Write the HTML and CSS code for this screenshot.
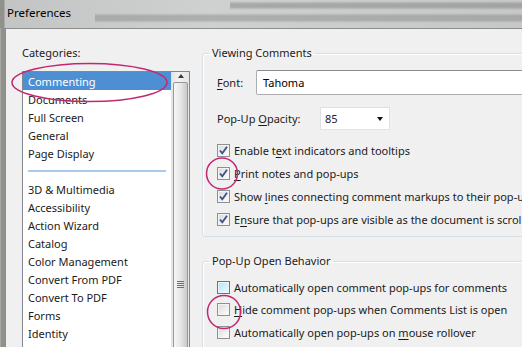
FILE: index.html
```html
<!DOCTYPE html>
<html lang="en">
<head>
  <meta charset="UTF-8" />
  <title>Preferences</title>
  <link rel="stylesheet" href="styles.css">
</head>
<body>
  <div class="titlebar">
    <span class="title">Preferences</span>
  </div>

  <div class="dialog">
    <div class="categories">
      <div class="cat-label">Categories:</div>
      <div class="listbox">
        <ul class="items">
          <li class="selected">Commenting</li>
          <li>Documents</li>
          <li>Full Screen</li>
          <li>General</li>
          <li>Page Display</li>
          <li class="sep"><span></span></li>
          <li>3D &amp; Multimedia</li>
          <li>Accessibility</li>
          <li>Action Wizard</li>
          <li>Catalog</li>
          <li>Color Management</li>
          <li>Convert From PDF</li>
          <li>Convert To PDF</li>
          <li>Forms</li>
          <li>Identity</li>
        </ul>
        <div class="scrollbar">
          <div class="scroll-btn"><span class="up-arrow"></span></div>
          <div class="thumb"><span class="grip"></span></div>
        </div>
      </div>
    </div>

    <div class="panel">
      <fieldset class="group first">
        <legend>Viewing Comments</legend>
        <div class="field-row font-row">
          <label class="field-label font-label"><u>F</u>ont:</label>
          <div class="textbox">Tahoma</div>
        </div>
        <div class="field-row opacity-row">
          <label class="field-label opacity-label">Pop-Up <u>O</u>pacity:</label>
          <div class="select"><span>85</span><span class="down-arrow"></span></div>
        </div>
        <div class="checks">
          <div class="check-row"><span class="box checked"><svg viewBox="0 0 11 11"><path d="M2 5.5 L4.3 8.3 L9 1.8" /></svg></span><span>Enable t<u>e</u>xt indicators and tooltips</span></div>
          <div class="check-row"><span class="box checked"><svg viewBox="0 0 11 11"><path d="M2 5.5 L4.3 8.3 L9 1.8" /></svg></span><span><u>P</u>rint notes and pop-ups</span></div>
          <div class="check-row"><span class="box checked"><svg viewBox="0 0 11 11"><path d="M2 5.5 L4.3 8.3 L9 1.8" /></svg></span><span>Show <u>l</u>ines connecting comment markups to their pop-ups</span></div>
          <div class="check-row"><span class="box checked"><svg viewBox="0 0 11 11"><path d="M2 5.5 L4.3 8.3 L9 1.8" /></svg></span><span>E<u>n</u>sure that pop-ups are visible as the document is scrolled</span></div>
        </div>
      </fieldset>

      <fieldset class="group second">
        <legend>Pop-Up Open Behavior</legend>
        <div class="checks">
          <div class="check-row"><span class="box hover"></span><span>Automatically open comment pop-ups for comments</span></div>
          <div class="check-row"><span class="box"></span><span><u>H</u>ide comment pop-ups when Comments List is open</span></div>
          <div class="check-row"><span class="box"></span><span>Automatically open pop-ups on <u>m</u>ouse rollover</span></div>
        </div>
      </fieldset>
    </div>
  </div>

  <!-- annotation marks drawn over the screenshot -->
  <svg class="marks" width="522" height="347">
    <ellipse cx="89.5" cy="82.5" rx="77.5" ry="19" />
    <circle cx="222" cy="173.5" r="15.5" />
    <circle cx="224" cy="312" r="16.5" />
  </svg>
</body>
</html>
```

FILE: styles.css
```css
body {
  margin: 0;
  width: 522px;
  height: 347px;
  overflow: hidden;
  position: relative;
  font-family: "Noto Sans", "DejaVu Sans", sans-serif;
  font-size: 11px;
  color: #1b1b1b;
  background: #a8a8a4;
}
u {
  text-decoration: underline;
  text-underline-offset: 2px;
}
.titlebar {
  height: 28px;
  padding-left: 7px;
  line-height: 26px;
  background-color: #c9cacb;
  background-image:
    linear-gradient(to bottom, transparent 1px, rgba(95, 95, 95, 0.35) 4px, rgba(95, 95, 95, 0.35) 7px, transparent 10px),
    linear-gradient(to bottom, transparent 13px, rgba(95, 95, 95, 0.3) 16px, rgba(95, 95, 95, 0.3) 20px, transparent 23px),
    linear-gradient(to right, #8f918a 0, #8f918a 4px, #c3c4c4 5px, #cfd0d0 40%, #c6c7c7 100%);
  background-repeat: no-repeat;
  background-size: 300px 28px, 430px 28px, 100% 28px;
  background-position: 230px 0, 95px 0, 0 0;
}
.title {
  color: #000;
  font-size: 11.5px;
}
.dialog {
  display: flex;
  margin-left: 5px;
  height: 318px;
  border-top: 1px solid #8d8d8d;
  border-left: 1px solid #8d8d8d;
  background: #f0f0f0;
  box-shadow: -4px 0 0 #8f918a;
  overflow: hidden;
}
.categories {
  width: 168px;
  padding: 16px 0 0 16px;
  flex-shrink: 0;
}
.cat-label {
  line-height: 16px;
  margin-bottom: 10px;
}
.listbox {
  display: flex;
  height: 300px;
  border: 1px solid #828790;
  background: #fff;
}
.items {
  list-style: none;
  margin: 0;
  padding: 0;
  flex: 1;
}
.items li {
  height: 18px;
  line-height: 19px;
  padding-left: 5px;
  white-space: nowrap;
}
.items li.selected {
  background: #4e8fd4;
  color: #fff;
}
.items li.sep {
  display: flex;
  align-items: center;
  padding: 0 5px;
}
.items li.sep span {
  flex: 1;
  height: 2px;
  background: #a9cbeb;
}
.scrollbar {
  width: 17px;
  flex-shrink: 0;
  display: flex;
  flex-direction: column;
  background: linear-gradient(to right, #e6e6e6, #f2f2f2 40%, #e6e6e6);
  border-left: 1px solid #e3e3e3;
}
.scroll-btn {
  height: 18px;
  display: flex;
  align-items: center;
  justify-content: center;
}
.up-arrow {
  width: 0;
  height: 0;
  border-left: 3.5px solid transparent;
  border-right: 3.5px solid transparent;
  border-bottom: 4px solid #3a3a3a;
}
.thumb {
  margin: 2px 1px 0 1px;
  height: 410px;
  border: 1px solid #989898;
  border-radius: 2px;
  background: linear-gradient(to right, #f6f6f6, #e7e7e7 50%, #c9c9c9);
  display: flex;
  justify-content: center;
  padding-top: 198px;
  box-sizing: border-box;
}
.grip {
  width: 7px;
  height: 7px;
  background: repeating-linear-gradient(to bottom, #6f6f6f 0, #6f6f6f 1px, transparent 1px, transparent 2px);
}
.panel {
  flex: 1;
  padding: 16px 0 0 12px;
}
.group {
  width: 420px;
  margin: 0;
  border: 1px solid #d5dfe5;
  border-radius: 3px;
  box-shadow: inset 1px 1px 0 #fff;
  padding: 0 0 5px 14px;
}
.group legend {
  padding: 0 3px;
  margin-left: -8px;
  line-height: 16px;
}
.field-row {
  display: flex;
  align-items: center;
}
.font-row {
  margin-top: 9px;
  height: 25px;
}
.font-label {
  width: 39px;
}
.textbox {
  width: 360px;
  height: 23px;
  line-height: 23px;
  padding-left: 6px;
  background: #fff;
  border: 1px solid #abadb3;
  border-top-color: #8a8c91;
  border-radius: 2px;
  color: #000;
}
.opacity-row {
  margin-top: 12px;
  height: 23px;
}
.opacity-label {
  width: 103px;
}
.select {
  width: 58px;
  height: 21px;
  padding: 0 6px 0 4px;
  background: #fff;
  border: 1px solid #e1e1e1;
  color: #1a1a3a;
  display: flex;
  justify-content: space-between;
  align-items: center;
}
.down-arrow {
  width: 0;
  height: 0;
  border-left: 3.5px solid transparent;
  border-right: 3.5px solid transparent;
  border-top: 4px solid #111;
}
.first .checks {
  margin-top: 9px;
}
.second {
  margin-top: 16px;
  padding-bottom: 40px;
}
.second .checks {
  margin-top: 7px;
}
.check-row {
  display: flex;
  align-items: center;
  height: 23px;
  white-space: nowrap;
}
.second .check-row {
  height: 22.5px;
}
.box {
  width: 11px;
  height: 11px;
  margin-right: 4px;
  border: 1px solid #8e8f8f;
  background: linear-gradient(135deg, #d8d8d8, #f4f4f4 70%, #fff);
  box-shadow: inset 0 0 0 1px #f4f4f4;
  flex-shrink: 0;
  display: flex;
}
.box svg {
  width: 11px;
  height: 11px;
}
.box path {
  fill: none;
  stroke: #3f4f8a;
  stroke-width: 1.8;
}
.box.hover {
  border-color: #3c7fb1;
  background: linear-gradient(135deg, #b9e0f6, #def3fd 70%, #eaf7fe);
  box-shadow: inset 0 0 0 1px #e8f6fd;
}
.marks {
  position: absolute;
  left: 0;
  top: 0;
  pointer-events: none;
}
.marks ellipse,
.marks circle {
  fill: none;
  stroke: #c2286f;
  stroke-width: 1.5;
}
```
